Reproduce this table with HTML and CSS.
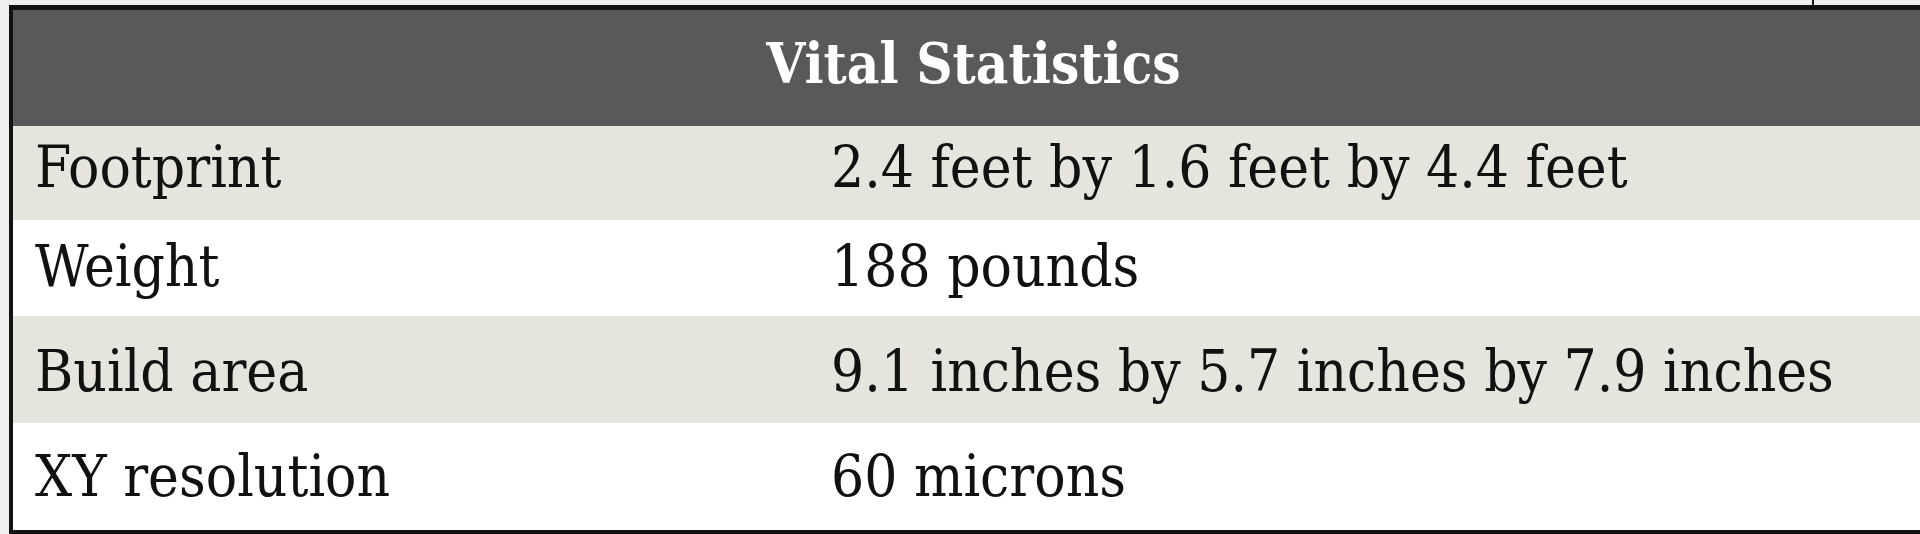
FILE: index.html
```html
<!DOCTYPE html>
<html lang="en">
<head>
<meta charset="utf-8">
<title>Vital Statistics</title>
<link rel="stylesheet" href="styles.css">
</head>
<body>
<div class="page">
  <div class="top-strip"><span class="tick"></span></div>
  <div class="stats">
    <div class="stats-head"><span class="title">Vital Statistics</span></div>
    <div class="row row-1 shaded"><div class="cell label">Footprint</div><div class="cell value">2.4 feet by 1.6 feet by 4.4 feet</div></div>
    <div class="row row-2"><div class="cell label">Weight</div><div class="cell value">188 pounds</div></div>
    <div class="row row-3 shaded"><div class="cell label">Build area</div><div class="cell value">9.1 inches by 5.7 inches by 7.9 inches</div></div>
    <div class="row row-4"><div class="cell label">XY resolution</div><div class="cell value">60 microns</div></div>
  </div>
</div>
</body>
</html>
```
FILE: styles.css
```css
html, body {
  margin: 0;
  padding: 0;
  background: #efeff0;
}
.page {
  width: 1920px;
  height: 534px;
  padding-left: 9px;
  box-sizing: border-box;
  overflow: hidden;
  font-family: "DejaVu Serif Condensed", "DejaVu Serif", serif;
  color: #111111;
}
.top-strip {
  height: 5px;
  display: flex;
}
.tick {
  width: 2px;
  height: 5px;
  background: #1a1a1a;
  margin-left: 1803px;
}
.stats {
  border-top: 5px solid #121212;
  border-left: 4px solid #121212;
  border-bottom: 4px solid #121212;
  display: grid;
  grid-template-rows: 116px 94px 96px 107px 107px;
}
.stats-head {
  background: #58595b;
  color: #ffffff;
  display: flex;
  align-items: flex-start;
  justify-content: center;
  padding-left: 14px;
  padding-top: 21px;
  box-sizing: border-box;
  font-weight: bold;
  font-size: 56px;
  line-height: 65px;
}
.row {
  display: grid;
  grid-template-columns: 818px 1fr;
  align-items: start;
  background: #ffffff;
  font-size: 58px;
  line-height: 70px;
  box-sizing: border-box;
}
.row.shaded {
  background: #e5e5de;
}
.cell.label {
  padding-left: 22px;
}
.row-1 { padding-top: 6px; }
.row-2 { padding-top: 11px; }
.row-3 { padding-top: 20px; }
.row-4 { padding-top: 18px; }
```
